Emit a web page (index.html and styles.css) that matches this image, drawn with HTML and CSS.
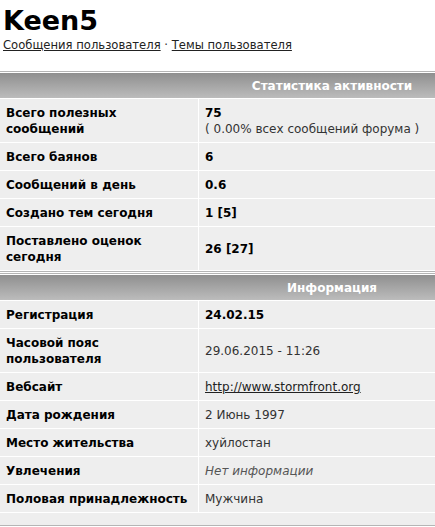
FILE: index.html
```html
<!DOCTYPE html>
<html lang="ru">
<head>
<meta charset="utf-8">
<title>Keen5</title>
<link rel="stylesheet" href="styles.css">
</head>
<body>
<h1 class="username">Keen5</h1>
<div class="links"><a href="#">Сообщения пользователя</a> · <a href="#">Темы пользователя</a></div>

<div class="section">
<table class="info">
<tr><th colspan="2" class="head">Статистика активности</th></tr>
<tr class="two"><td class="label">Всего полезных сообщений</td><td class="value"><b>75</b><br>( 0.00% всех сообщений форума )</td></tr>
<tr><td class="label">Всего баянов</td><td class="value"><b>6</b></td></tr>
<tr><td class="label">Сообщений в день</td><td class="value"><b>0.6</b></td></tr>
<tr><td class="label">Создано тем сегодня</td><td class="value"><b>1 [5]</b></td></tr>
<tr class="two"><td class="label">Поставлено оценок сегодня</td><td class="value"><b>26 [27]</b></td></tr>
</table>
</div>

<div class="section">
<table class="info">
<tr><th colspan="2" class="head">Информация</th></tr>
<tr><td class="label">Регистрация</td><td class="value"><b>24.02.15</b></td></tr>
<tr class="two"><td class="label">Часовой пояс пользователя</td><td class="value">29.06.2015 - 11:26</td></tr>
<tr><td class="label">Вебсайт</td><td class="value"><a href="#">http://www.stormfront.org</a></td></tr>
<tr><td class="label">Дата рождения</td><td class="value">2 Июнь 1997</td></tr>
<tr><td class="label">Место жительства</td><td class="value">хуйлостан</td></tr>
<tr><td class="label">Увлечения</td><td class="value"><i class="none">Нет информации</i></td></tr>
<tr><td class="label">Половая принадлежность</td><td class="value">Мужчина</td></tr>
<tr><td colspan="2" class="foot"></td></tr>
</table>
</div>
</body>
</html>
```

FILE: styles.css
```css
html, body {
  margin: 0;
  padding: 0;
  background: #ffffff;
  font-family: "DejaVu Sans", Verdana, sans-serif;
  font-size: 12px;
  color: #000;
}
.username {
  margin: 0;
  padding: 6px 3px 0;
  font-size: 27px;
  line-height: 30px;
  font-weight: bold;
  color: #000;
}
.links {
  padding: 0 3px;
  font-size: 11.6px;
  line-height: 16px;
  margin-top: 1px;
  margin-bottom: 18px;
  color: #333;
}
.links a {
  color: #222;
  text-decoration: underline;
}
.section {
  border-top: 1px solid #b5b5b5;
  border-bottom: 1px solid #b5b5b5;
  padding-top: 1px;
  margin-bottom: 1px;
}
.info {
  width: 100%;
  border-collapse: collapse;
}
.head {
  height: 25px;
  padding: 0 0 0 229px;
  text-align: center;
  color: #fff;
  font-weight: bold;
  background: linear-gradient(#8f8f8f, #bcbcbc);
  border-bottom: 1px solid #fff;
}
.info td {
  background: #eeeeee;
  border-bottom: 1px solid #fff;
  line-height: 16px;
  padding: 6px 6px 5px;
  vertical-align: middle;
}
.label {
  width: 186px;
  font-weight: bold;
  color: #000;
  border-right: 1px solid #fff;
}
.value {
  color: #333;
}
.value b {
  color: #000;
}
.value a {
  color: #222;
}
.none {
  color: #555;
}
.info td.foot {
  height: 12px;
  padding: 0;
  border-bottom: 0;
}
```
